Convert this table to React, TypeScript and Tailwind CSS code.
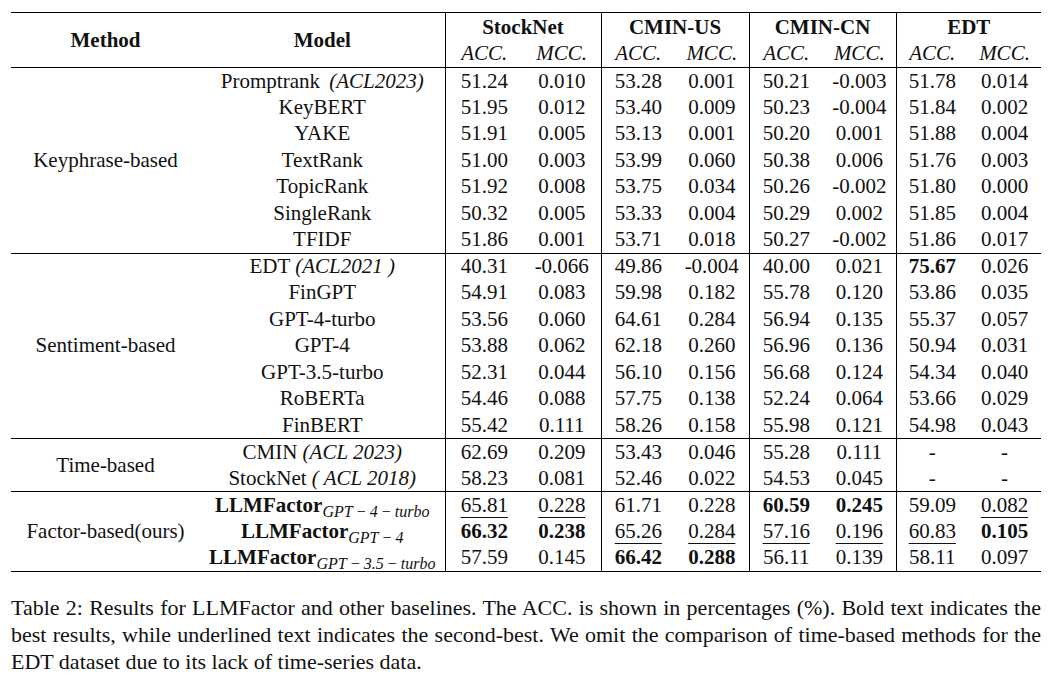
import type { ReactNode } from 'react'

type Row = { model: ReactNode; vals: string }

const Cite = ({ children }: { children: ReactNode }) => <span className="italic">{children}</span>

const Sub = ({ children }: { children: ReactNode }) => (
  <span className="italic font-normal text-[16px] relative top-[5px]">{children}</span>
)
const Minus = () => <span className="mx-[4px] not-italic">−</span>

const groups: { method: string; rows: Row[] }[] = [
  {
    method: 'Keyphrase-based',
    rows: [
      { model: <>Promptrank <span className="ml-[4px]"><Cite>(ACL2023)</Cite></span></>, vals: '51.24 0.010 53.28 0.001 50.21 -0.003 51.78 0.014' },
      { model: 'KeyBERT', vals: '51.95 0.012 53.40 0.009 50.23 -0.004 51.84 0.002' },
      { model: 'YAKE', vals: '51.91 0.005 53.13 0.001 50.20 0.001 51.88 0.004' },
      { model: 'TextRank', vals: '51.00 0.003 53.99 0.060 50.38 0.006 51.76 0.003' },
      { model: 'TopicRank', vals: '51.92 0.008 53.75 0.034 50.26 -0.002 51.80 0.000' },
      { model: 'SingleRank', vals: '50.32 0.005 53.33 0.004 50.29 0.002 51.85 0.004' },
      { model: 'TFIDF', vals: '51.86 0.001 53.71 0.018 50.27 -0.002 51.86 0.017' },
    ],
  },
  {
    method: 'Sentiment-based',
    rows: [
      { model: <>EDT <Cite>(ACL2021 )</Cite></>, vals: '40.31 -0.066 49.86 -0.004 40.00 0.021 *75.67 0.026' },
      { model: 'FinGPT', vals: '54.91 0.083 59.98 0.182 55.78 0.120 53.86 0.035' },
      { model: 'GPT-4-turbo', vals: '53.56 0.060 64.61 0.284 56.94 0.135 55.37 0.057' },
      { model: 'GPT-4', vals: '53.88 0.062 62.18 0.260 56.96 0.136 50.94 0.031' },
      { model: 'GPT-3.5-turbo', vals: '52.31 0.044 56.10 0.156 56.68 0.124 54.34 0.040' },
      { model: 'RoBERTa', vals: '54.46 0.088 57.75 0.138 52.24 0.064 53.66 0.029' },
      { model: 'FinBERT', vals: '55.42 0.111 58.26 0.158 55.98 0.121 54.98 0.043' },
    ],
  },
  {
    method: 'Time-based',
    rows: [
      { model: <>CMIN <Cite>(ACL 2023)</Cite></>, vals: '62.69 0.209 53.43 0.046 55.28 0.111 - -' },
      { model: <>StockNet <Cite>( ACL 2018)</Cite></>, vals: '58.23 0.081 52.46 0.022 54.53 0.045 - -' },
    ],
  },
  {
    method: 'Factor-based(ours)',
    rows: [
      {
        model: <span className="font-bold">LLMFactor<Sub>GPT<Minus />4<Minus />turbo</Sub></span>,
        vals: '_65.81 _0.228 61.71 0.228 *60.59 *0.245 59.09 _0.082',
      },
      {
        model: <span className="font-bold">LLMFactor<Sub>GPT<Minus />4</Sub></span>,
        vals: '*66.32 *0.238 _65.26 _0.284 _57.16 _0.196 _60.83 *0.105',
      },
      {
        model: <span className="font-bold">LLMFactor<Sub>GPT<Minus />3.5<Minus />turbo</Sub></span>,
        vals: '57.59 0.145 *66.42 *0.288 56.11 0.139 58.11 0.097',
      },
    ],
  },
]

const datasets = ['StockNet', 'CMIN-US', 'CMIN-CN', 'EDT']

function Val({ v }: { v: string }) {
  if (v.startsWith('*')) return <span className="font-bold">{v.slice(1)}</span>
  if (v.startsWith('_'))
    return <span className="underline decoration-1 underline-offset-[5px]">{v.slice(1)}</span>
  return <>{v}</>
}

export default function App() {
  return (
    <div className="w-[1063px] h-[685px] bg-white text-[#111] pl-[11px] pt-[12px] font-[family-name:Liberation_Serif,serif]">
      <table className="table-fixed border-collapse w-[1030px] text-[21px] leading-none border-y border-black font-[family-name:Liberation_Serif,serif]">
        <colgroup>
          <col className="w-[189px]" />
          <col className="w-[245px]" />
          <col className="w-[78px]" />
          <col className="w-[78px]" />
          <col className="w-[74px]" />
          <col className="w-[74px]" />
          <col className="w-[74px]" />
          <col className="w-[73px]" />
          <col className="w-[72px]" />
          <col className="w-[73px]" />
        </colgroup>
        <thead>
          <tr className="h-[27.5px]">
            <th rowSpan={2} className="p-0 font-bold text-center align-middle">Method</th>
            <th rowSpan={2} className="p-0 font-bold text-center align-middle">Model</th>
            {datasets.map((d) => (
              <th key={d} colSpan={2} className="p-0 pt-[2px] font-bold text-center border-l border-black">{d}</th>
            ))}
          </tr>
          <tr className="h-[27.5px]">
            {datasets.map((d) => [
              <th key={d + 'a'} className="p-0 font-normal italic text-center border-l border-black">ACC.</th>,
              <th key={d + 'm'} className="p-0 font-normal italic text-center">MCC.</th>,
            ])}
          </tr>
        </thead>
        {groups.map((g) => (
          <tbody key={g.method} className="border-t border-black">
            {g.rows.map((r, i) => {
              const vals = r.vals.split(' ')
              return (
                <tr key={i} className="h-[26.5px]">
                  {i === 0 && (
                    <td rowSpan={g.rows.length} className="p-0 text-center align-middle">{g.method}</td>
                  )}
                  <td className="p-0 text-center whitespace-nowrap">{r.model}</td>
                  {vals.map((v, j) => (
                    <td key={j} className={`p-0 text-center ${j % 2 === 0 ? 'border-l border-black' : ''}`}>
                      <Val v={v} />
                    </td>
                  ))}
                </tr>
              )
            })}
          </tbody>
        ))}
      </table>
      <p className="w-[1030px] mt-[22px] text-[22px] leading-[27px] text-justify">
        Table 2: Results for LLMFactor and other baselines. The ACC. is shown in percentages (%). Bold text indicates the
        best results, while underlined text indicates the second-best. We omit the comparison of time-based methods for the
        EDT dataset due to its lack of time-series data.
      </p>
    </div>
  )
}
